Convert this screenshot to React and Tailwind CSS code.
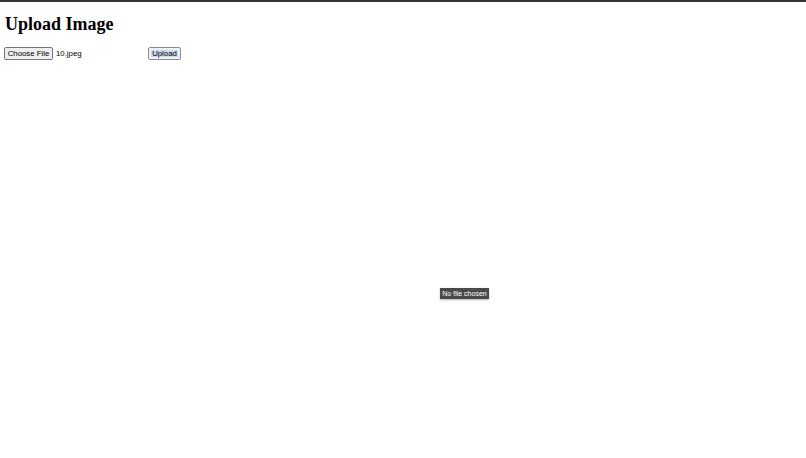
import React from "react";

export default function App() {
  return (
    <div className="relative w-[806px] h-[458px] bg-white overflow-hidden">
      <div className="h-[2px] bg-[#333333]" />
      <div className="px-[5px]">
        <h1
          className="mt-[12px] mb-[12px] text-[18px] leading-[21px] font-bold text-black"
          style={{ fontFamily: '"Liberation Serif", "Times New Roman", serif' }}
        >
          Upload Image
        </h1>
        <div
          className="flex items-center text-[7.8px] leading-none text-black"
          style={{ fontFamily: '"Liberation Sans", Arial, sans-serif' }}
        >
          <div className="flex items-center w-[143px] -ml-[1px]">
            <button className="h-[13px] w-[49px] border border-[#767676] rounded-[2px] bg-[#efefef] text-black flex items-center justify-center">
              Choose File
            </button>
            <span className="ml-[3px]">10.jpeg</span>
          </div>
          <button className="ml-[1px] h-[13px] w-[33px] border border-[#8a8a8a] rounded-[2px] bg-[#f2f2f2] flex items-center justify-center">
            <span className="bg-[#c9d9f2] px-[1px]">Upload</span>
          </button>
        </div>
      </div>
      <div
        className="absolute left-[440px] top-[288px] h-[11px] w-[49px] bg-[#4a4a4a] text-white text-[7px] leading-[11px] text-center shadow-[0_1px_2px_rgba(0,0,0,0.3)]"
        style={{ fontFamily: '"Liberation Sans", Arial, sans-serif' }}
      >
        No file chosen
      </div>
    </div>
  );
}
